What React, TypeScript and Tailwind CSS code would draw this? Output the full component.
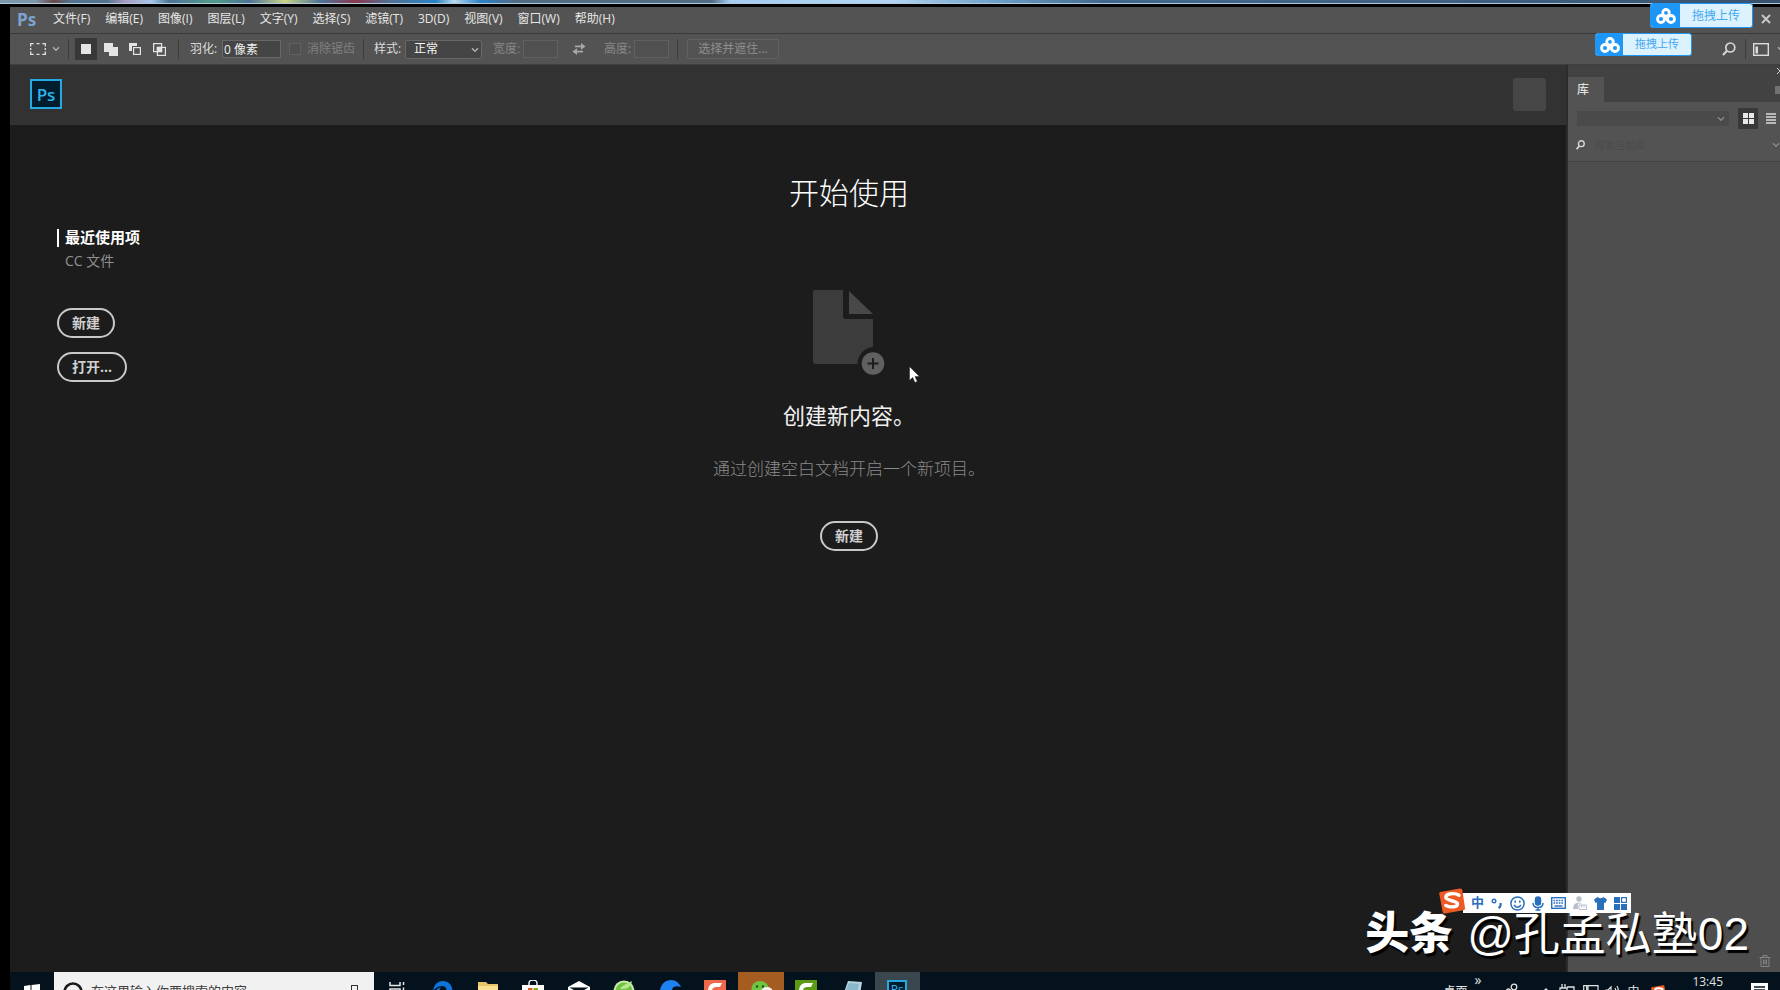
import { ReactNode } from "react";

const menus = [
  "文件(F)",
  "编辑(E)",
  "图像(I)",
  "图层(L)",
  "文字(Y)",
  "选择(S)",
  "滤镜(T)",
  "3D(D)",
  "视图(V)",
  "窗口(W)",
  "帮助(H)",
];

const Chevron = ({ className = "" }: { className?: string }) => (
  <svg className={className} width="8" height="6" viewBox="0 0 8 6" fill="none" stroke="currentColor" strokeWidth="1.4">
    <path d="M1 1.2l3 3 3-3" />
  </svg>
);

const Divider = ({ className = "" }: { className?: string }) => (
  <div className={`h-5 w-px shrink-0 bg-[#3c3c3c] ${className}`} />
);

const SogouLogo = ({ size }: { size: number }) => (
  <svg width={size} height={size} viewBox="0 0 26 26">
    <path d="M1 4L21 0.5a2 2 0 0 1 2.3 1.6L26 20a2 2 0 0 1-1.6 2.3L6 25.5a2 2 0 0 1-2.3-1.6L0.3 6A2 2 0 0 1 1 4z" fill="#ee5a24" />
    <path d="M20 7.2C16 4.6 7.200 5.200 6.800 9.200c-.3 4 11.400 3 11.700 6.600.2 3.200-6.500 4.200-11.700 1.600" fill="none" stroke="#fff" strokeWidth="3.4" strokeLinecap="round" />
  </svg>
);

const MenuBar = () => (
  <div className="flex h-[27px] shrink-0 items-center border-b border-[#3a3a3a] bg-[#535353] pb-0.5 pl-[7px]">
    <span className="w-9 text-[17px] font-bold leading-none text-[#7ba3cf]">Ps</span>
    <nav className="flex flex-1 gap-[15px]">
      {menus.map((menu) => (
        <button key={menu} className="text-xs text-[#e6e6e6]">
          {menu}
        </button>
      ))}
    </nav>
    <button aria-label="关闭" className="mr-2 text-[#c8c8c8]">
      <svg width="12" height="12" viewBox="0 0 12 12" stroke="currentColor" strokeWidth="2">
        <path d="M2 2l8 8M10 2l-8 8" />
      </svg>
    </button>
  </div>
);

const OptionsBar = () => (
  <div className="flex h-[31px] shrink-0 items-center overflow-hidden border-b border-[#3f3f3f] bg-[#535353] text-xs text-[#dcdcdc]">
    <button aria-label="矩形选框工具" className="ml-5 flex w-[38px] shrink-0 items-center gap-1.5">
      <svg width="16" height="12" viewBox="0 0 16 12" fill="none" stroke="#e0e0e0" strokeWidth="1.300">
        <path d="M.7 3.500V.7h3M6.500.7h3M12.300.7h3v2.800M15.300 5v2M15.300 8.500v2.800h-3M9.500 11.300h-3M3.700 11.300h-3V8.500M.7 7V5" />
      </svg>
      <Chevron className="text-[#b0b0b0]" />
    </button>
    <Divider />
    <div className="ml-1.5 flex shrink-0 items-center gap-px">
      <button aria-label="新选区" className="flex h-[22px] w-[22px] items-center justify-center bg-[#383838]">
        <svg width="10" height="10">
          <rect width="10" height="10" fill="#e4e4e4" />
        </svg>
      </button>
      <button aria-label="添加到选区" className="ml-0.5 flex h-[22px] w-[22px] items-center justify-center">
        <svg width="14" height="13" viewBox="0 0 14 13" fill="#e4e4e4">
          <path d="M0 0h9v4h5v9H5V9H0z" />
        </svg>
      </button>
      <button aria-label="从选区减去" className="flex h-[22px] w-[23px] items-center justify-center">
        <svg width="12" height="12" viewBox="0 0 12 12">
          <path d="M0 0h8v3H3v5H0z" fill="#e4e4e4" />
          <rect x="4.600" y="4.600" width="6.800" height="6.800" fill="none" stroke="#e4e4e4" strokeWidth="1.200" />
        </svg>
      </button>
      <button aria-label="与选区交叉" className="flex h-[22px] w-[24px] items-center justify-center">
        <svg width="13" height="13" viewBox="0 0 13 13" fill="none" stroke="#e4e4e4" strokeWidth="1.200">
          <rect x=".6" y=".6" width="8" height="8" />
          <rect x="4.400" y="4.400" width="8" height="8" />
          <rect x="4.400" y="4.400" width="4.200" height="4.200" fill="#e4e4e4" />
        </svg>
      </button>
    </div>
    <Divider className="ml-[7px]" />
    <label htmlFor="feather" className="ml-[11px] w-8 shrink-0">
      羽化:
    </label>
    <input
      id="feather"
      defaultValue="0 像素"
      className="h-[18px] w-[59px] shrink-0 border border-[#686868] bg-[#454545] px-px text-xs text-[#f0f0f0] outline-none"
    />
    <label className="ml-2 flex shrink-0 items-center gap-1.5 text-[#808080]">
      <input type="checkbox" disabled className="h-3 w-3 appearance-none border border-[#606060] bg-[#4f4f4f]" />
      消除锯齿
    </label>
    <Divider className="ml-2" />
    <label htmlFor="style" className="ml-2.5 w-[31px] shrink-0">
      样式:
    </label>
    <div className="relative shrink-0">
      <select
        id="style"
        className="block h-[19px] w-[77px] appearance-none rounded-xs border border-[#686868] bg-[#454545] pl-2 text-xs text-[#f4f4f4] outline-none"
      >
        <option>正常</option>
      </select>
      <Chevron className="pointer-events-none absolute right-[3px] top-[7px] text-[#b0b0b0]" />
    </div>
    <label htmlFor="width" className="ml-[11px] w-[30px] shrink-0 text-[#888888]">
      宽度:
    </label>
    <input id="width" disabled className="h-[18px] w-[35px] shrink-0 border border-[#606060] bg-[#505050]" />
    <button aria-label="高度和宽度互换" className="mx-[14px] shrink-0">
      <svg width="14" height="12" viewBox="0 0 14 12" fill="#a8a8a8">
        <path d="M3 2.600h6V0l4.500 3.400L9 6.800V4.200H3zM11 7.800H5V5.200L.5 8.600 5 12V9.400h6z" />
      </svg>
    </button>
    <label htmlFor="height" className="ml-1 w-[30px] shrink-0 text-[#888888]">
      高度:
    </label>
    <input id="height" disabled className="h-[18px] w-[35px] shrink-0 border border-[#606060] bg-[#505050]" />
    <Divider className="ml-2" />
    <button className="ml-[9px] h-5 w-[92px] shrink-0 rounded-xs border border-[#626262] text-xs text-[#909090]">
      选择并遮住...
    </button>
    <div className="ml-auto flex shrink-0 items-center">
      <button aria-label="搜索" className="mr-[9px]">
        <svg width="14" height="14" viewBox="0 0 14 14" fill="none" stroke="#d8d8d8" strokeWidth="1.700">
          <circle cx="8.300" cy="5.500" r="4.500" />
          <path d="M5 8.800L1 13" strokeWidth="2" />
        </svg>
      </button>
      <Divider />
      <button aria-label="选择工作区" className="ml-[7px] flex items-center gap-2">
        <svg width="16" height="13" viewBox="0 0 16 13">
          <rect x=".7" y=".7" width="14.600" height="11.600" fill="none" stroke="#dcdcdc" strokeWidth="1.400" />
          <path d="M2.500 3.500h2.500v7H2.500z" fill="#dcdcdc" />
        </svg>
        <Chevron className="-mr-[5px] text-[#b0b0b0]" />
      </button>
    </div>
  </div>
);

const PillButton = ({ children }: { children: ReactNode }) => (
  <button className="h-[30px] rounded-full border-2 border-[#c8c8c8] px-[13px] text-sm font-bold leading-none text-[#d0d0d0]">
    {children}
  </button>
);

const StartScreen = () => (
  <main className="flex min-w-0 flex-1 flex-col bg-[#1c1c1c]">
    <header className="flex h-[60px] shrink-0 items-center justify-between bg-[#323232] px-5 pb-0.5">
      <div className="flex h-[30px] w-8 items-center justify-center border-2 border-[#26a9e0] bg-[#001d2e] text-[17px] leading-none font-semibold text-[#31b4ee]">
        Ps
      </div>
      <div className="h-[33px] w-[33px] rounded-[3px] bg-[#464646]" />
    </header>
    <div className="flex flex-1">
      <aside className="w-[140px] shrink-0 pl-[47px] pt-[101px]">
        <ul className="text-[15px] leading-[23px]">
          <li>
            <a href="#recent" className="flex items-center font-bold text-white">
              <span className="mr-1.5 h-[18px] w-0.5 bg-white" />
              最近使用项
            </a>
          </li>
          <li>
            <a href="#cc" className="block pl-2 text-sm leading-[23px] text-[#909090]">
              CC 文件
            </a>
          </li>
        </ul>
        <div className="mt-9 flex flex-col items-start gap-[14px]">
          <PillButton>新建</PillButton>
          <PillButton>打开...</PillButton>
        </div>
      </aside>
      <section className="flex flex-1 flex-col items-center pr-[18px] pt-12">
        <h1 className="text-3xl leading-10 font-light text-white">开始使用</h1>
        <svg className="mt-[77px]" width="72" height="86" viewBox="0 0 72 86">
          <path d="M2 0h28v26a3 3 0 0 0 3 3h27v28a17 17 0 0 0-15.500 17H2a2 2 0 0 1-2-2V2a2 2 0 0 1 2-2z" fill="#3c3c3c" />
          <path d="M36 1l24 23H36z" fill="#484848" />
          <circle cx="60" cy="73.500" r="11.300" fill="#606060" />
          <path d="M60 68v11M54.500 73.500h11" stroke="#1c1c1c" strokeWidth="2" />
        </svg>
        <h2 className="mt-[23px] text-[22px] leading-8 text-[#f0f0f0]">创建新内容。</h2>
        <p className="mt-[26px] mb-10 text-[17px] leading-6 font-light text-[#8a8a8a]">通过创建空白文档开启一个新项目。</p>
        <PillButton>新建</PillButton>
      </section>
    </div>
  </main>
);

const LibraryPanel = () => (
  <aside className="flex w-[214px] shrink-0 flex-col overflow-hidden border-l-2 border-[#2c2c2c] bg-[#4e4e4e]">
    <div className="flex h-3 items-center justify-end bg-[#424242] text-[#d0d0d0]">
      <svg width="3" height="6" viewBox="0 0 3 6" stroke="currentColor" fill="none">
        <path d="M0 0l3 3-3 3" />
      </svg>
    </div>
    <div className="flex h-[25px] items-stretch justify-between bg-[#424242]">
      <button className="w-9 bg-[#535353] pr-1.5 text-xs font-medium text-[#e0e0e0]">库</button>
      <svg className="self-center text-[#a0a0a0]" width="5" height="8" viewBox="0 0 5 8" stroke="currentColor">
        <path d="M0 1h5M0 3h5M0 5h5M0 7h5" />
      </svg>
    </div>
    <div className="border-b border-[#444444] bg-[#535353] pb-1.5">
      <div className="flex items-center pl-[9px] pt-1.5">
        <div className="relative flex-1">
          <select aria-label="库" disabled className="block h-[15px] w-full appearance-none bg-[#4a4a4a]" />
          <Chevron className="pointer-events-none absolute right-1 top-[5px] text-[#888888]" />
        </div>
        <button aria-label="网格视图" className="ml-[9px] flex h-[21px] w-5 items-center justify-center bg-[#383838]">
          <svg width="11" height="11" viewBox="0 0 11 11" fill="#e8e8e8">
            <path d="M0 0h5v5H0zM6 0h5v5H6zM0 6h5v5H0zM6 6h5v5H6z" />
          </svg>
        </button>
        <button aria-label="列表视图" className="ml-2 mr-1">
          <svg width="10" height="11" viewBox="0 0 10 11" stroke="#dcdcdc" strokeWidth="1.600">
            <path d="M0 1h10M0 4h10M0 7h10M0 10h10" />
          </svg>
        </button>
      </div>
      <div className="mt-1.5 flex h-5 items-center pl-2">
        <svg className="shrink-0" width="9" height="10" viewBox="0 0 9 10" fill="none" stroke="#d8d8d8" strokeWidth="1.400">
          <circle cx="5.300" cy="3.700" r="2.900" />
          <path d="M3.300 6L.6 9.300" strokeWidth="1.800" />
        </svg>
        <input
          aria-label="搜索"
          placeholder="搜索当前库"
          className="ml-2.5 min-w-0 flex-1 bg-transparent text-[10px] outline-none placeholder:text-[#4b4b4b]"
        />
        <Chevron className="text-[#888888]" />
      </div>
    </div>
    <button aria-label="删除" className="mb-[5px] mr-[9px] mt-auto self-end">
      <svg width="12" height="12" viewBox="0 0 12 12" fill="none" stroke="#858585">
        <path d="M.5 2.500h11M4 2.500v-2h4v2M2 2.500v9h8v-9M4.500 4.500v5M6 4.500v5M7.500 4.500v5" />
      </svg>
    </button>
  </aside>
);

const UploadIcon = () => (
  <svg width="20" height="16" viewBox="0 0 20 16" fill="none" stroke="#fff" strokeWidth="2.800">
    <circle cx="10" cy="4.800" r="3.300" />
    <circle cx="5" cy="11" r="3.500" />
    <circle cx="15" cy="11" r="3.500" />
    <path d="M7.800 8.500l4.700 5" strokeWidth="2.400" />
  </svg>
);

const apps = [
  {
    name: "任务视图",
    cell: "",
    icon: (
      <g fill="none" stroke="#e8e8e8" strokeWidth="1.500">
        <path d="M5 2v3.500h10V2M5 20V9h10v11M18.500 2v3M18.500 7.500V20" />
      </g>
    ),
  },
  {
    name: "Edge",
    cell: "",
    icon: (
      <path d="M3 11C4 4 8 1 13 1c6 0 9.500 4.500 9.500 11H9c0 4 6 6 12 3v5C14 24 5 22 4.500 14 5 10 8 8 11 7c-1 1-1.500 2-1.500 3h7c0-6-9-5-13.500 1z" fill="#0c74da" />
    ),
  },
  {
    name: "文件资源管理器",
    cell: "",
    icon: (
      <>
        <path d="M2 2h8l2 2h10v18H2z" fill="#e9c566" />
        <path d="M2 6h20v16H2z" fill="#fbe091" />
      </>
    ),
  },
  {
    name: "应用商店",
    cell: "",
    icon: (
      <>
        <path d="M8 6V3a4 3 0 0 1 8 0v3" fill="none" stroke="#fff" strokeWidth="1.400" />
        <path d="M1 5h22v18H1z" fill="#fff" />
        <path d="M7 8h4.500v5H7z" fill="#e4572e" />
        <path d="M12.500 8H17v5h-4.500z" fill="#7cb518" />
      </>
    ),
  },
  {
    name: "邮件",
    cell: "",
    icon: (
      <>
        <path d="M1 7l11-6 11 6v15H1z" fill="#fff" />
        <path d="M2.500 7.500h19L12 13z" fill="#03121c" />
      </>
    ),
  },
  {
    name: "安全浏览器",
    cell: "",
    icon: (
      <>
        <circle cx="12" cy="11" r="10.500" fill="#c9e8b0" />
        <circle cx="12" cy="11" r="8.500" fill="#6fc23f" />
        <path d="M8 9c2-4 7-5 12-8-1 5-4 8-9 8z" fill="#b5e58c" />
      </>
    ),
  },
  {
    name: "浏览器",
    cell: "",
    icon: <path d="M2 12C2 5 7 0 13 0c5 0 8 3 10 7-5-2-9 0-9 3 0 2 3 3 8 2-1 6-6 10-11 10S2 18 2 12z" fill="#1d83f2" />,
  },
  {
    name: "Camtasia 录制",
    cell: "",
    icon: (
      <>
        <rect x="1" y="-1" width="22" height="24" rx="2" fill="#f0694b" />
        <path d="M19 3h-7c-4 0-7 3-7 8h4c0-3 2-4 4-4h4z" fill="#fff" />
      </>
    ),
  },
  {
    name: "微信",
    cell: "bg-[#a55c20]",
    icon: (
      <>
        <ellipse cx="11" cy="8.500" rx="8.500" ry="7.500" fill="#6cc644" />
        <circle cx="8" cy="6.500" r="1.200" fill="#244d12" />
        <circle cx="14" cy="6.500" r="1.200" fill="#244d12" />
        <ellipse cx="18" cy="12" rx="6" ry="5" fill="#f4f4f4" />
      </>
    ),
  },
  {
    name: "Camtasia",
    cell: "",
    icon: (
      <>
        <rect x="1" y="-1" width="22" height="24" rx="1" fill="#5a9b13" />
        <path d="M19 3h-7c-4 0-7 3-7 8h4c0-3 2-4 4-4h4z" fill="#fff" />
      </>
    ),
  },
  {
    name: "记事本",
    cell: "",
    icon: (
      <>
        <path d="M8 1l14 1-3 19H1z" fill="#b6d5e2" />
        <path d="M9 3l10 .7-1 7-12-1z" fill="#8ab8cc" />
      </>
    ),
  },
];

const Taskbar = () => (
  // only the upper edge of the bar is on screen
  <footer className="h-[18px] shrink-0 overflow-hidden bg-[#03121c] text-xs text-[#e4e4e4]">
    <div className="flex h-10 items-center">
      <button aria-label="开始" className="flex w-11 shrink-0 justify-center">
        <svg width="16" height="16" viewBox="0 0 16 16" fill="#fff">
          <path d="M0 2l6.500-1v6.500H0zM7.500.9L16 0v7.500H7.500zM0 8.500h6.500V15L0 14zM7.500 8.500H16V16l-8.500-1z" />
        </svg>
      </button>
      <div className="flex h-10 w-80 shrink-0 items-center bg-[#f1f1f1] pl-[9px] pr-4">
        <svg width="20" height="20" viewBox="0 0 20 20" fill="none" stroke="#1b1b1b" strokeWidth="2.600">
          <circle cx="10" cy="10" r="8.500" />
        </svg>
        <input
          aria-label="搜索"
          placeholder="在这里输入你要搜索的内容"
          className="ml-2 min-w-0 flex-1 bg-transparent text-[13px] outline-none placeholder:text-[#404040]"
        />
        <svg width="7" height="15" viewBox="0 0 7 15" fill="none" stroke="#303030">
          <rect x=".5" y=".5" width="6" height="14" />
        </svg>
      </div>
      <div className="flex h-10 w-[546px] shrink-0">
        {apps.map((app) => (
          <button key={app.name} aria-label={app.name} className={`flex flex-1 items-center justify-center ${app.cell}`}>
            <svg width="24" height="24" viewBox="0 0 24 24">
              {app.icon}
            </svg>
          </button>
        ))}
        <button className="flex flex-1 items-center justify-center bg-[#3b474f]">
          <span className="flex h-6 w-5 justify-center border-2 border-[#26a9e0] bg-[#001d2e] text-xs leading-4 text-[#31b4ee]">
            Ps
          </span>
        </button>
      </div>
      <div className="ml-auto flex h-10 items-center">
        <span>桌面</span>
        <span className="ml-[7px] self-start text-sm leading-4">»</span>
        <svg className="ml-6" width="14" height="18" viewBox="0 0 14 18" fill="none" stroke="currentColor" strokeWidth="1.300">
          <circle cx="9" cy="4" r="2.800" />
          <circle cx="3.500" cy="8" r="2" />
          <path d="M5 14c0-8 8-8 8 0" />
        </svg>
        <svg className="ml-[22px]" width="10" height="8" viewBox="0 0 10 8" fill="none" stroke="currentColor" strokeWidth="1.400">
          <path d="M1 5l4-4 4 4" />
        </svg>
        <svg className="ml-2" width="16" height="16" viewBox="0 0 16 16" fill="none" stroke="currentColor" strokeWidth="1.300">
          <path d="M3 0v4M6 0v4M1 4h7v3H1zM8 3h7v9H4V8" />
        </svg>
        <svg className="ml-2" width="16" height="14" viewBox="0 0 16 14" fill="none" stroke="currentColor" strokeWidth="1.200">
          <path d="M.7.7h3v12h-3zM5 .7h10v10H5z" />
        </svg>
        <svg className="ml-1.5" width="14" height="14" viewBox="0 0 14 14" fill="none" stroke="currentColor" strokeWidth="1.200">
          <path d="M1 5h2l3-3v10L3 9H1zM8 5q1 2 0 4M10 3q2 4 0 8M12 1q3 6 0 12" />
        </svg>
        <span className="ml-2">中</span>
        <span className="ml-3">
          <SogouLogo size={15} />
        </span>
        <span className="ml-[26px] self-start pt-0.5 leading-4">13:45</span>
        <svg className="ml-7 mr-3" width="17" height="18" viewBox="0 0 17 18">
          <path d="M0 0h17v14h-5v4l-4-4H0z" fill="#fff" />
          <path d="M3 4h11M3 7h11M3 10h8" stroke="#03121c" strokeWidth="1.300" />
        </svg>
      </div>
    </div>
  </footer>
);

const InputMethodBar = () => (
  <div className="absolute bottom-[77px] right-[149px] flex h-5 items-center bg-white pl-1 pr-1 text-[#2a6fbb]">
    <span className="-ml-7 mr-[6px] -mt-1">
      <SogouLogo size={26} />
    </span>
    <div className="flex items-center gap-[7px]">
      <span className="text-[13px] font-bold">中</span>
      <svg width="12" height="12" viewBox="0 0 12 12" fill="none" stroke="currentColor" strokeWidth="1.400">
        <circle cx="3" cy="4" r="1.800" />
        <path d="M9.500 6v2.500q0 1.500-2 2.500" strokeWidth="2.200" />
      </svg>
      <svg width="15" height="15" viewBox="0 0 15 15" fill="none" stroke="currentColor" strokeWidth="1.500">
        <circle cx="7.500" cy="7.500" r="6.600" />
        <path d="M5.200 4.500v2.200M9.800 4.500v2.200M4 9q3.500 4.500 7 0" />
      </svg>
      <svg width="12" height="15" viewBox="0 0 12 15" fill="none" stroke="currentColor" strokeWidth="1.500">
        <rect x="3.500" y="1" width="5" height="8" rx="2.500" fill="currentColor" />
        <path d="M1 7q0 4.500 5 4.500T11 7M6 11.500V14M3.500 14h5" />
      </svg>
      <svg width="15" height="12" viewBox="0 0 15 12">
        <rect x=".7" y=".7" width="13.600" height="10.600" fill="none" stroke="currentColor" strokeWidth="1.400" />
        <path d="M2.500 3.500h10M2.500 6h10" stroke="currentColor" strokeWidth="1.500" strokeDasharray="1.700 .9" />
        <path d="M3.500 9h8" stroke="currentColor" strokeWidth="1.400" />
      </svg>
      <svg width="14" height="15" viewBox="0 0 14 15" fill="#b7bfcb">
        <circle cx="6" cy="3" r="2.700" />
        <path d="M0 13q0-6.500 6-6.500 2 0 3 1H5v5.500z" />
        <path d="M6 9h7.500v4.500H6zM8.500 9v2.500M11 9v2.500" fill="#fff" stroke="#b7bfcb" />
      </svg>
      <svg width="13" height="13" viewBox="0 0 13 13" fill="currentColor">
        <path d="M3.500 0q3 2.500 6 0L13 2.500 11.500 6 10 5.500V13H3V5.500L1.500 6 0 2.500z" />
      </svg>
      <svg width="13" height="13" viewBox="0 0 13 13" fill="currentColor">
        <path d="M0 0h6v6H0zM0 7h6v6H0zM7 7h6v6H7z" />
        <rect x="7.600" y=".6" width="4.800" height="4.800" fill="none" stroke="currentColor" strokeWidth="1.200" />
      </svg>
    </div>
  </div>
);

const App = () => {
  return (
    <div className="relative flex h-screen flex-col overflow-hidden bg-black font-['Open_Sans','Noto_Sans_CJK_SC',sans-serif]">
      <div className="h-1 shrink-0 border-b border-[#b4c8d8] bg-[linear-gradient(90deg,#7d97ab_0%,#7d97ab_2%,#6b4a45_3%,#52738f_4%,#52738f_6%,#a89ac0_7%,#a6c8ee_8.500%,#4e7396_9.500%,#4f9c8a_12%,#4e7396_14%,#c8d68a_16%,#4e7396_18%,#8c3950_20%,#4e7396_22%,#2a82c4_24.500%,#b8daf2_25.500%,#2a82c4_27%,#526c84_29%,#526c84_40%,#a4cdf2_41%,#b3d6f5_50%,#6d9fc8_56%,#41688c_62%,#3f5f80_85%,#37526e_100%)]" />
      <div className="flex min-h-0 flex-1 flex-col pl-2.5 pt-[3px]">
        <MenuBar />
        <OptionsBar />
        <div className="flex min-h-0 flex-1">
          <StartScreen />
          <LibraryPanel />
        </div>
        <Taskbar />
      </div>

      <button className="absolute right-[27px] top-[3px] flex h-[25px] w-[103px] items-stretch overflow-hidden rounded-[3px] border border-[#1e96f5] bg-[#dcf2ff] text-xs text-[#45a8ee]">
        <span className="flex w-[29px] items-center justify-center bg-[#1e96f5]">
          <UploadIcon />
        </span>
        <span className="flex-1 self-center">拖拽上传</span>
      </button>
      <button className="absolute right-[88px] top-[33px] flex h-[23px] w-[97px] items-stretch overflow-hidden rounded-[3px] border border-[#1e96f5] bg-[#dcf2ff] text-[11px] text-[#45a8ee]">
        <span className="flex w-[27px] items-center justify-center bg-[#1e96f5]">
          <UploadIcon />
        </span>
        <span className="flex-1 self-center">拖拽上传</span>
      </button>

      <svg className="absolute left-[909px] top-[366px]" width="12" height="18" viewBox="0 0 12 18">
        <path d="M.5.500v14l3.200-3 2.200 5 2.400-1-2.200-4.900h4.400z" fill="#fff" stroke="#1c1c1c" strokeWidth=".5" />
      </svg>

      <div className="absolute bottom-[26px] right-[31px] flex items-center gap-[14px] leading-[60px] text-white font-['Liberation_Sans','Noto_Sans_CJK_SC',sans-serif] [text-shadow:2px_3px_1px_#000]">
        <span className="text-[44px] font-black">头条</span>
        <span className="text-[46px]">@孔孟私塾02</span>
      </div>
      <InputMethodBar />
    </div>
  );
};

export default App;
